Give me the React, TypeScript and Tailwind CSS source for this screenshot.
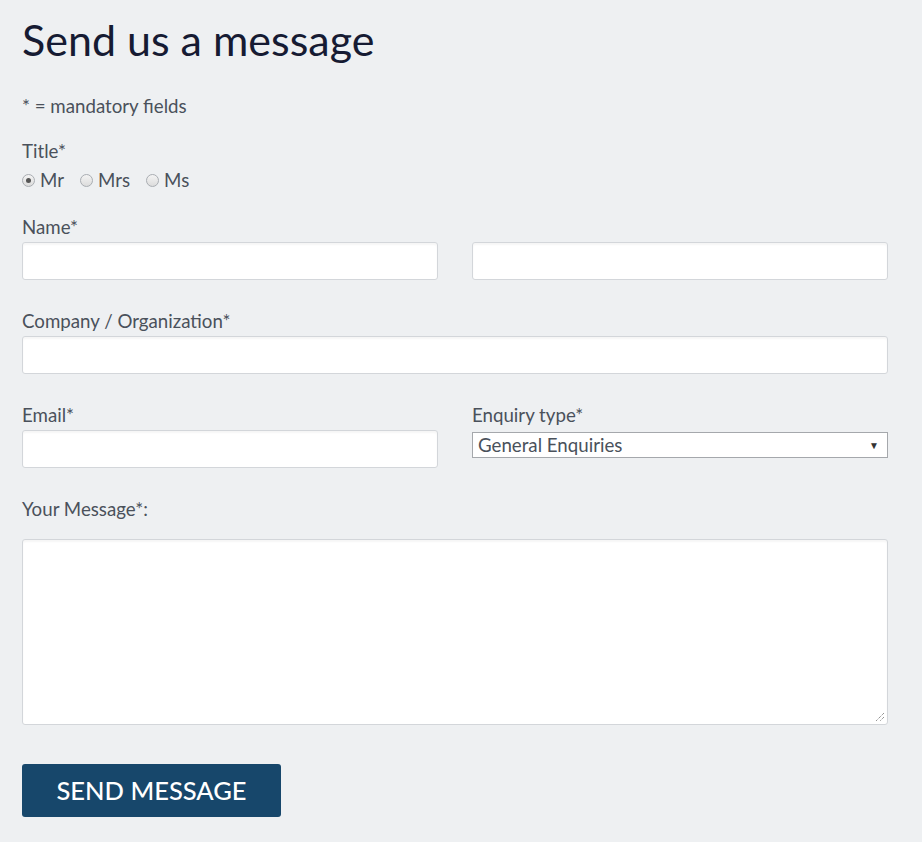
import type { ReactNode } from "react";

const FONT = "font-['Lato','Open_Sans',sans-serif]";

function Label({ children }: { children: ReactNode }) {
  return <div className="h-6 text-[18.7px] leading-6 text-[#4a515b]">{children}</div>;
}

function TextBox({ className = "" }: { className?: string }) {
  return (
    <div
      className={`h-[38px] rounded-[3px] border border-[#d3d6da] bg-white shadow-[inset_0_2px_2px_rgba(0,0,0,0.04)] ${className}`}
    />
  );
}

function Radio({ label, checked }: { label: string; checked?: boolean }) {
  return (
    <label className="flex items-center gap-[5px]">
      <span className="flex h-[13px] w-[13px] items-center justify-center rounded-full border border-[#a9adb2] bg-gradient-to-b from-[#f4f4f4] to-[#dcdcdc]">
        {checked && <span className="h-[5px] w-[5px] rounded-full bg-[#555]" />}
      </span>
      <span className="text-[18.7px] leading-6 text-[#4a515b]">{label}</span>
    </label>
  );
}

export default function App() {
  return (
    <div className={`min-h-[842px] w-[922px] bg-[#eef0f2] ${FONT}`}>
      <div className="w-[888px] pl-[22px] pt-[14px]">
        <h1 className="text-[43px] leading-[52px] text-[#161b33]">Send us a message</h1>

        <div className="mt-[28px]">
          <Label>* = mandatory fields</Label>
        </div>

        <div className="mt-[21px]">
          <Label>Title*</Label>
          <div className="mt-[5px] flex items-center gap-[16px]">
            <Radio label="Mr" checked />
            <Radio label="Mrs" />
            <Radio label="Ms" />
          </div>
        </div>

        <div className="mt-[23px]">
          <Label>Name*</Label>
          <div className="mt-[3px] grid grid-cols-2 gap-[34px]">
            <TextBox />
            <TextBox />
          </div>
        </div>

        <div className="mt-[29px]">
          <Label>Company / Organization*</Label>
          <TextBox className="mt-[3px]" />
        </div>

        <div className="mt-[29px] grid grid-cols-2 gap-[34px]">
          <div>
            <Label>Email*</Label>
            <TextBox className="mt-[3px]" />
          </div>
          <div>
            <Label>Enquiry type*</Label>
            <div className="mt-[5px] flex h-[26px] items-center justify-between border border-[#a5a8ac] bg-white pl-[5px] pr-[8px]">
              <span className="text-[18.7px] leading-6 text-[#4a515b]">General Enquiries</span>
              <span className="text-[10px] text-[#333]">▼</span>
            </div>
          </div>
        </div>

        <div className="mt-[29px]">
          <Label>Your Message*:</Label>
          <div className="relative mt-[18px] h-[186px] rounded-[3px] border border-[#d3d6da] bg-white shadow-[inset_0_2px_2px_rgba(0,0,0,0.04)]">
            <svg className="absolute bottom-[2px] right-[2px]" width="10" height="10" viewBox="0 0 10 10">
              <path d="M9 1 L1 9 M9 5 L5 9" stroke="#666" strokeWidth="1" strokeDasharray="1 1" />
            </svg>
          </div>
        </div>

        <button className="mt-[39px] flex h-[53px] w-[259px] items-center justify-center rounded-[3px] bg-[#17476b] text-[25.5px] font-medium text-white">
          SEND MESSAGE
        </button>
      </div>
    </div>
  );
}
